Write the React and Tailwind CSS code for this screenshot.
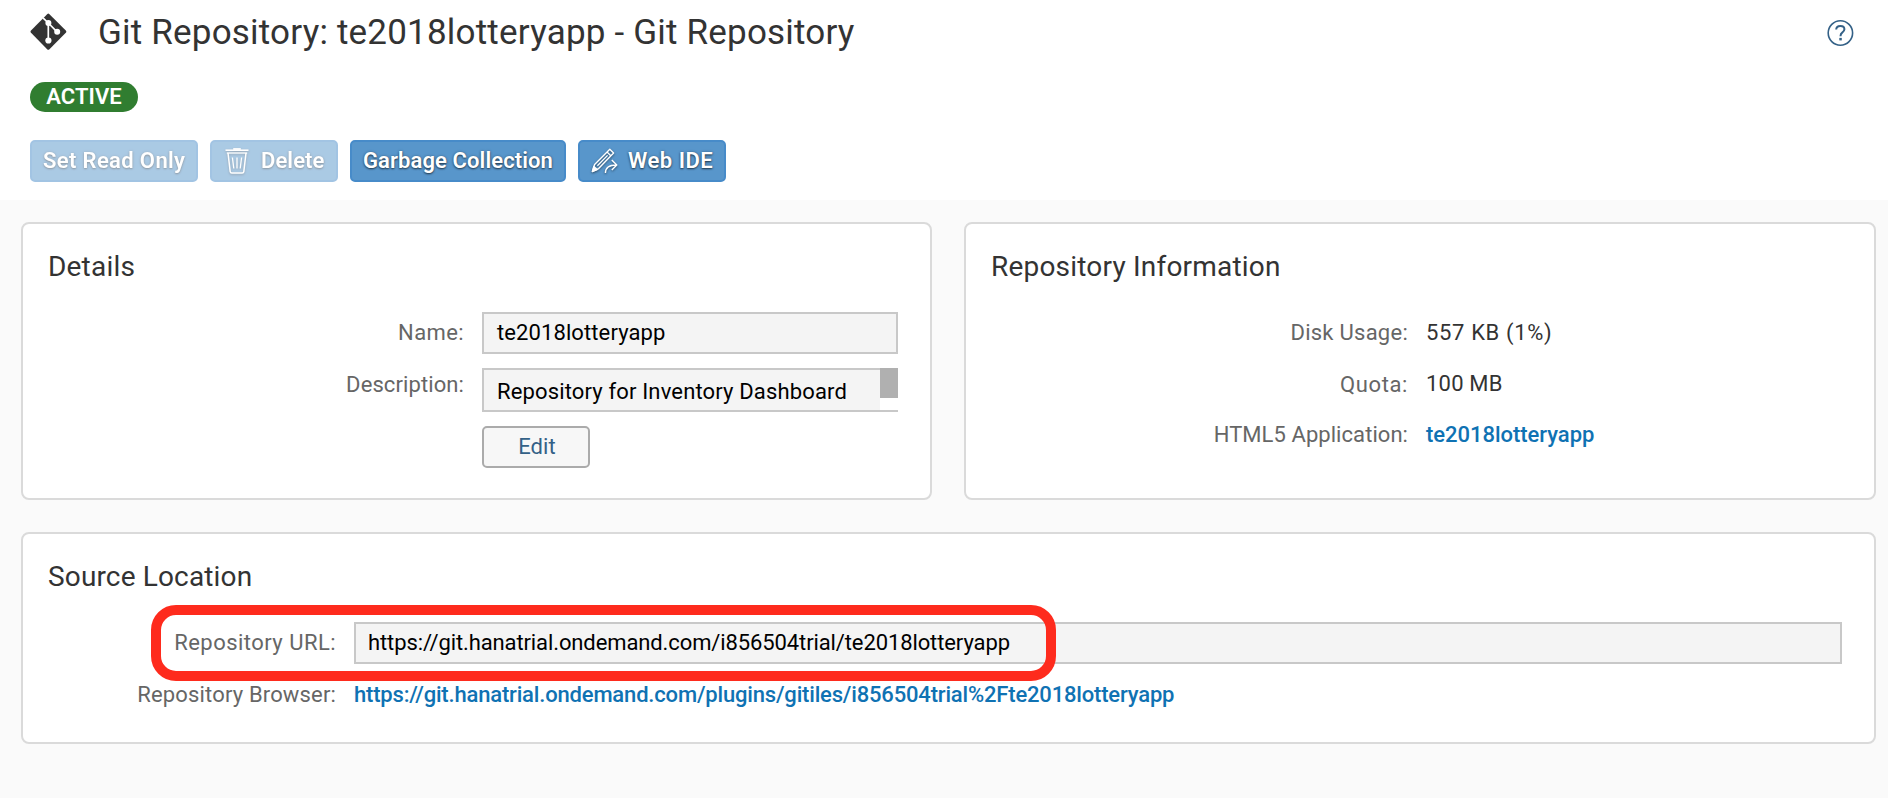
function GitIcon() {
  return (
    <svg className="mt-px h-[37px] w-[37px] shrink-0" viewBox="0 0 37 37" fill="none">
      <path d="M17.4 1 L1 17.6 Q0 18.7 1 19.8 L17.4 36.4 Q18.3 37.2 19.2 36.4 L35.8 19.8 Q36.8 18.7 35.8 17.6 L19.2 1 Q18.3 0.2 17.4 1 Z" fill="#333" />
      <g stroke="#fff" strokeWidth="1.7">
        <path d="M13 4.8 L18.3 10 M18.3 10 V27.5 M18.3 10 L27 18.8" />
      </g>
      <g fill="#fff">
        <circle cx="18.4" cy="10" r="3" />
        <circle cx="27.2" cy="18.8" r="3" />
        <circle cx="18.4" cy="27.5" r="3.1" />
      </g>
    </svg>
  );
}

function HelpIcon() {
  return (
    <svg className="mt-[7px] h-[28px] w-[28px]" viewBox="0 0 28 28" fill="none" stroke="#346187">
      <circle cx="14.4" cy="14" r="12.2" strokeWidth="1.6" />
      <path d="M10.2 10.6 C10.2 8.1 12 6.9 14.4 6.9 C16.8 6.9 18.4 8.3 18.4 10.3 C18.4 12 17.4 12.8 16.2 13.6 C14.9 14.5 14.5 15.2 14.5 17.2" strokeWidth="2" />
      <rect x="13.3" y="18.9" width="2.5" height="2.5" fill="#346187" stroke="none" />
    </svg>
  );
}

function TrashIcon() {
  return (
    <svg className="h-[28px] w-[24px] drop-shadow-[0_1px_1px_rgba(0,0,0,0.5)]" viewBox="0 0 24 28" fill="none" stroke="#fff">
      <path d="M0.5 3.2 H23.5" strokeWidth="1.6" />
      <path d="M8.2 2 H15.8" strokeWidth="1.8" />
      <path d="M1.8 6 H22.2" strokeWidth="1.3" />
      <path d="M3 6 L5.2 24.6 Q5.4 26 6.8 26 H17.2 Q18.6 26 18.8 24.6 L21 6" strokeWidth="1.5" />
      <path d="M7.4 10.5 L8.8 21.5 M12 10.5 V21.5 M16.6 10.5 L15.2 21.5" strokeWidth="1.3" />
    </svg>
  );
}

function PencilIcon() {
  return (
    <svg className="h-[28px] w-[28px] drop-shadow-[0_1px_1px_rgba(0,0,0,0.5)]" viewBox="0 0 28 28" fill="none" stroke="#fff" strokeWidth="1.4" strokeLinejoin="round">
      <path d="M1.5 24.4 L3.6 17.4 L18.8 2.2 L22.6 6 L7.6 21.6 Z" />
      <path d="M16 5 L19.8 8.8 M16.6 8.4 L6.4 18.8" strokeWidth="1.3" />
      <path d="M1.3 24.6 L2.8 19.4 L6.2 22.6 Z" fill="#fff" />
      <path d="M14.4 26 C14.4 21 17.6 18 25.4 18 M20.8 13 L25.8 18 L20.8 23" />
    </svg>
  );
}

const actionBase =
  "box-border flex h-[42px] items-center rounded-[5px] border-2 border-[#478bc9] bg-[#5896cb] pb-px text-[22px] leading-[40px] font-semibold whitespace-nowrap text-white [text-shadow:0_1px_2px_rgba(0,0,0,0.6),0_0_3px_rgba(0,0,0,0.25)]";
const label = "shrink-0 text-right whitespace-nowrap text-[#666]";
const input = "box-border border-2 border-[#c8c8c8] bg-[#f4f4f4] whitespace-nowrap text-black";
const card = "box-border rounded-[8px] border-2 border-[#dadada] bg-white pt-[27px]";
const heading = "text-[28px] leading-[32px] font-normal whitespace-nowrap text-[#333]";

export default function App() {
  return (
    <div className="flex h-[798px] w-[1888px] flex-col overflow-hidden bg-[#fafafa] font-['Roboto',sans-serif] text-[22px] leading-[42px] text-[#333]">
      <header className="h-[200px] shrink-0 bg-white pt-[12px] pr-[34px] pl-[30px]">
        <div className="flex h-[40px] items-start">
          <GitIcon />
          <h1 className="ml-[31px] flex-1 text-[35px] leading-[42px] font-normal tracking-[0.2px] whitespace-nowrap">
            Git Repository: te2018lotteryapp - Git Repository
          </h1>
          <HelpIcon />
        </div>
        <div className="mt-[30px] h-[30px] w-[108px] rounded-full bg-[#307d30] text-center text-[22px] leading-[30px] font-semibold tracking-[0.1px] text-white">
          ACTIVE
        </div>
        <div className="mt-[28px] flex gap-[12px]">
          <button className={`${actionBase} w-[168px] pl-[11px] tracking-[0.36px] opacity-50`}>Set Read Only</button>
          <button className={`${actionBase} w-[128px] pl-[13px] tracking-[0.1px] opacity-50`}>
            <TrashIcon />
            <span className="ml-[12px]">Delete</span>
          </button>
          <button className={`${actionBase} w-[216px] pl-[11px] tracking-[0.1px]`}>Garbage Collection</button>
          <button className={`${actionBase} w-[148px] pl-[11px] tracking-[0.5px]`}>
            <PencilIcon />
            <span className="ml-[9px]">Web IDE</span>
          </button>
        </div>
      </header>

      <main className="flex flex-1 flex-col gap-[32px] pt-[22px] pr-[12px] pl-[21px]">
        <div className="flex h-[278px] shrink-0 gap-[32px]">
          <section className={`${card} w-[911px]`}>
            <h2 className={`${heading} pl-[25px] tracking-[0.2px]`}>Details</h2>
            <div className="mt-[29px] flex gap-[18px]">
              <div className={`${label} w-[441px] tracking-[0.4px]`}>Name:</div>
              <div className={`${input} h-[42px] w-[416px] pl-[13px] leading-[38px] tracking-[0.1px]`}>te2018lotteryapp</div>
            </div>
            <div className="mt-[14px] flex h-[44px] gap-[18px]">
              <div className={`${label} w-[441px] leading-[34px] tracking-[0.1px]`}>Description:</div>
              <div className="flex w-[416px] border-b-2 border-[#c8c8c8]">
                <div className="w-[398px] border-t-2 border-l-2 border-[#c8c8c8] bg-[#f4f4f4] pl-[13px] leading-[44px] tracking-[0.15px] whitespace-nowrap text-black">
                  Repository for Inventory Dashboard
                </div>
                <div className="h-[30px] w-[18px] bg-[#b0b0b0]" />
              </div>
            </div>
            <button className="mt-[14px] ml-[459px] box-border block h-[42px] w-[108px] rounded-[5px] border-2 border-[#ababab] bg-[#f7f7f7] pl-[2px] text-center leading-[38px] tracking-[0.1px] text-[#346187]">
              Edit
            </button>
          </section>

          <section className={`${card} w-[912px]`}>
            <h2 className={`${heading} pl-[25px] tracking-[0.2px]`}>Repository Information</h2>
            <div className="mt-[29px] flex gap-[18px]">
              <div className={`${label} w-[442px] tracking-[0.26px]`}>Disk Usage:</div>
              <div className="tracking-[0.65px]">557 KB (1%)</div>
            </div>
            <div className="mt-[10px] flex gap-[18px]">
              <div className={`${label} w-[442px] tracking-[0.6px]`}>Quota:</div>
              <div className="leading-[40px] tracking-[0.2px]">100 MB</div>
            </div>
            <div className="mt-[8px] flex gap-[18px]">
              <div className={`${label} w-[442px] tracking-[0.06px]`}>HTML5 Application:</div>
              <a className="font-medium tracking-[-0.03px] text-[#0f72b3]">te2018lotteryapp</a>
            </div>
          </section>
        </div>

        <section className={`${card} h-[212px] w-[1855px] shrink-0`}>
          <h2 className={`${heading} pl-[25px] tracking-[0.15px]`}>Source Location</h2>
          <div className="relative mt-[29px] flex gap-[18px]">
            <div className={`${label} w-[313px] tracking-[0.46px]`}>Repository URL:</div>
            <div className={`${input} h-[42px] w-[1488px] pl-[12px] leading-[38px] tracking-[-0.11px]`}>
              https://git.hanatrial.ondemand.com/i856504trial/te2018lotteryapp
            </div>
            <div className="absolute top-[-17px] left-[128px] box-border h-[76px] w-[905px] rounded-[25px] border-[10px] border-[#fe2b1d]" />
          </div>
          <div className="mt-[10px] flex gap-[18px]">
            <div className={`${label} w-[313px] tracking-[0.16px]`}>Repository Browser:</div>
            <a className="font-medium tracking-[-0.175px] whitespace-nowrap text-[#0f72b3]">
              https://git.hanatrial.ondemand.com/plugins/gitiles/i856504trial%2Fte2018lotteryapp
            </a>
          </div>
        </section>
      </main>
    </div>
  );
}
